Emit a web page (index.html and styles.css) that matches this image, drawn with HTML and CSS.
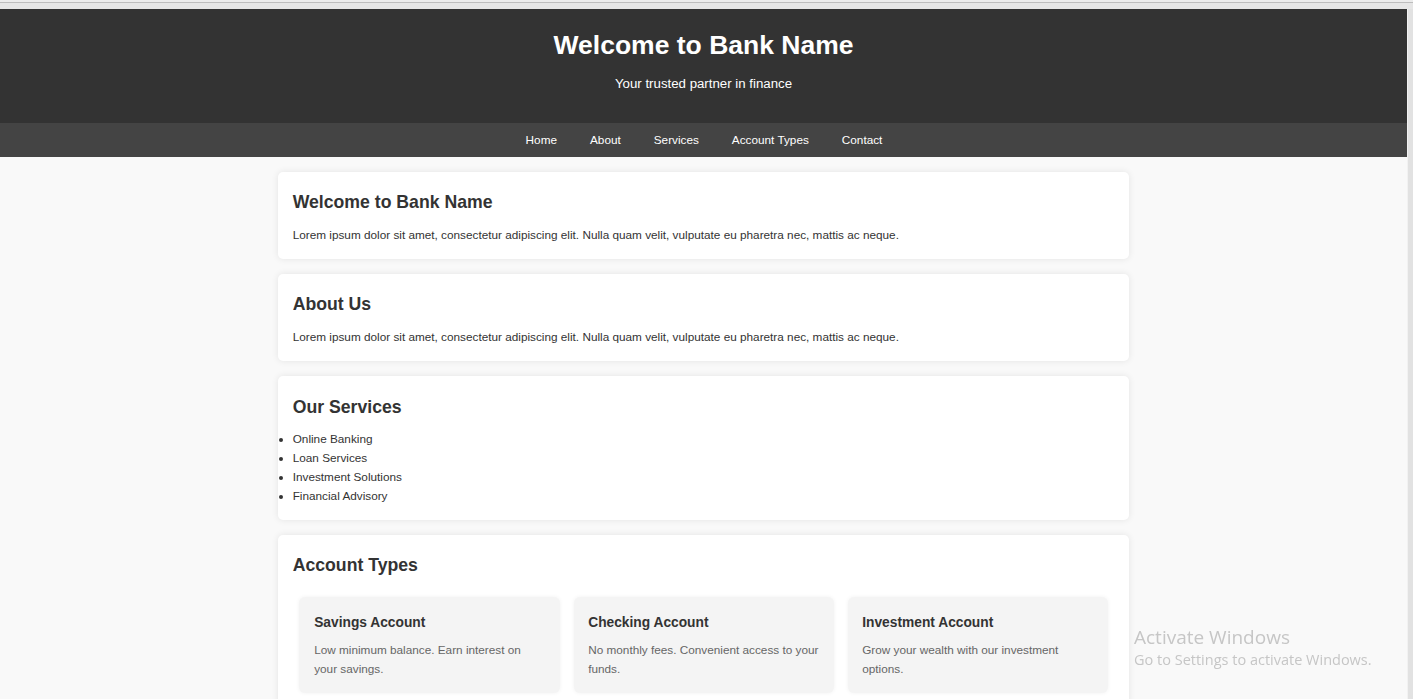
FILE: index.html
```html
<!DOCTYPE html>
<html lang="en">
<head>
<meta charset="utf-8">
<title>Bank Name</title>
<link rel="stylesheet" href="styles.css">
</head>
<body>
<div class="chrome"></div>
<div class="frame">
  <div class="viewport">
    <header class="site-header">
      <h1 class="site-title">Welcome to Bank Name</h1>
      <p class="site-tagline">Your trusted partner in finance</p>
    </header>
    <nav class="site-nav">
      <a href="#">Home</a>
      <a href="#">About</a>
      <a href="#">Services</a>
      <a href="#">Account Types</a>
      <a href="#">Contact</a>
    </nav>
    <main class="container">
      <section class="card">
        <h2 class="card-title">Welcome to Bank Name</h2>
        <p class="card-text">Lorem ipsum dolor sit amet, consectetur adipiscing elit. Nulla quam velit, vulputate eu pharetra nec, mattis ac neque.</p>
      </section>
      <section class="card">
        <h2 class="card-title">About Us</h2>
        <p class="card-text">Lorem ipsum dolor sit amet, consectetur adipiscing elit. Nulla quam velit, vulputate eu pharetra nec, mattis ac neque.</p>
      </section>
      <section class="card">
        <h2 class="card-title">Our Services</h2>
        <ul class="service-list">
          <li>Online Banking</li>
          <li>Loan Services</li>
          <li>Investment Solutions</li>
          <li>Financial Advisory</li>
        </ul>
      </section>
      <section class="card">
        <h2 class="card-title">Account Types</h2>
        <div class="accounts">
          <div class="account">
            <h3 class="account-title">Savings Account</h3>
            <p class="account-text">Low minimum balance. Earn interest on your savings.</p>
          </div>
          <div class="account">
            <h3 class="account-title">Checking Account</h3>
            <p class="account-text">No monthly fees. Convenient access to your funds.</p>
          </div>
          <div class="account">
            <h3 class="account-title">Investment Account</h3>
            <p class="account-text">Grow your wealth with our investment options.</p>
          </div>
        </div>
      </section>
      <section class="card">
        <h2 class="card-title">Contact Us</h2>
        <p class="card-text">Email: info@bankname.com</p>
      </section>
    </main>
  </div>
  <div class="scroll-track"></div>
</div>
<div class="watermark">
  <div class="wm-title">Activate Windows</div>
  <div class="wm-text">Go to Settings to activate Windows.</div>
</div>
</body>
</html>
```

FILE: styles.css
```css
html, body {
  margin: 0;
  padding: 0;
  height: 100%;
  overflow: hidden;
}

body {
  background: #e6e6e6;
  font-family: "Liberation Sans", Arial, sans-serif;
  font-size: 11.78px;
  line-height: 1.6;
  color: #333;
}

.chrome {
  height: 2px;
  background: #ececec;
  border-bottom: 1px solid #bdbdbd;
  margin-bottom: 6px;
}

.frame {
  display: flex;
  height: calc(100% - 9px);
}

.viewport {
  width: 1408px;
  flex: none;
  background: #f9f9f9;
  border-right: 1px solid #f2f2f2;
  box-sizing: border-box;
  overflow: hidden;
}

.scroll-track {
  flex: 1;
  background: #e2e2e2;
}

.site-header {
  background: #333;
  color: #fff;
  text-align: center;
  padding: 14.7px 14.7px 14.7px;
}

.site-title {
  margin: 0 0 7px;
  font-size: 26.5px;
  line-height: 1.6;
  font-weight: bold;
}

.site-tagline {
  margin: 0 0 13.7px;
  font-size: 13.25px;
  line-height: 1.6;
}

.site-nav {
  background: #444;
  display: flex;
  justify-content: center;
  gap: 33px;
  padding: 8.2px 0 7px 1px;
}

.site-nav a {
  color: #fff;
  text-decoration: none;
  font-size: 11.78px;
  line-height: 18.8px;
}

.container {
  width: 851px;
  margin: 15px auto 0;
  display: flex;
  flex-direction: column;
  gap: 14.9px;
}

.card {
  background: #fff;
  border-radius: 5px;
  box-shadow: 0 0 7px rgba(0, 0, 0, 0.09);
  padding: 14.7px;
}

.card-title {
  margin: 1.6px 0 9.4px;
  font-size: 17.66px;
  line-height: 1.6;
  font-weight: bold;
  color: #333;
}

.card-text {
  margin: 0;
}

.service-list {
  margin: 0;
  padding: 0;
}

.accounts {
  display: flex;
  gap: 14px;
  padding: 0 6.8px;
  margin-top: 17.5px;
}

.account {
  flex: 1;
  background: #f4f4f4;
  border-radius: 6px;
  box-shadow: 0 0 4px rgba(0, 0, 0, 0.06);
  padding: 14.7px;
}

.account-title {
  margin: 0 0 7px;
  font-size: 13.78px;
  line-height: 1.6;
  font-weight: bold;
  color: #333;
}

.account-text {
  margin: 0;
  color: #666;
}

.watermark {
  position: fixed;
  left: 1134px;
  top: 624px;
  color: #c6c6c6;
  font-family: "Open Sans", "Noto Sans", sans-serif;
}

.wm-title {
  font-size: 19px;
  line-height: 26px;
}

.wm-text {
  font-size: 14.5px;
  line-height: 20px;
}
```
